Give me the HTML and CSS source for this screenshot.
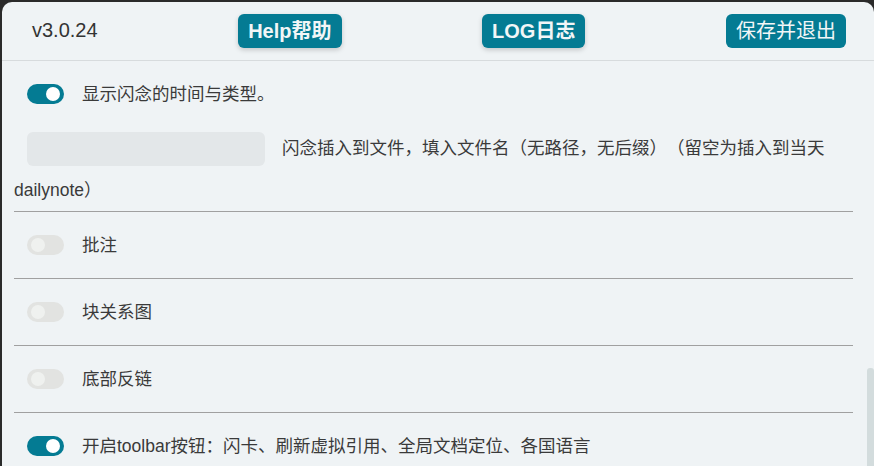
FILE: index.html
```html
<!DOCTYPE html>
<html lang="zh-CN">
<head>
<meta charset="UTF-8">
<meta name="viewport" content="width=device-width, initial-scale=1.0">
<title>设置</title>
<link rel="stylesheet" href="styles.css">
</head>
<body>
<div class="panel">
  <div class="header">
    <span class="version">v3.0.24</span>
    <button class="btn btn-bold">Help帮助</button>
    <button class="btn btn-bold">LOG日志</button>
    <button class="btn btn-plain">保存并退出</button>
  </div>
  <div class="content">
    <div class="row first">
      <span class="toggle on"></span>
      <span class="label">显示闪念的时间与类型。</span>
    </div>
    <div class="row-text">
      <span class="input"></span>闪念插入到文件，填入文件名（无路径，无后缀）（留空为插入到当天 dailynote）
    </div>
    <div class="row">
      <span class="toggle"></span>
      <span class="label">批注</span>
    </div>
    <div class="row">
      <span class="toggle"></span>
      <span class="label">块关系图</span>
    </div>
    <div class="row">
      <span class="toggle"></span>
      <span class="label">底部反链</span>
    </div>
    <div class="row">
      <span class="toggle on"></span>
      <span class="label">开启toolbar按钮：闪卡、刷新虚拟引用、全局文档定位、各国语言</span>
    </div>
  </div>
  <div class="scroll-thumb"></div>
</div>
</body>
</html>
```

FILE: styles.css
```css
html, body {
  margin: 0;
  height: 100%;
  overflow: hidden;
}

body {
  background-color: #2a2a2a;
  font-family: "Liberation Sans", "Noto Sans CJK SC", sans-serif;
  color: #3a3a3a;
  text-spacing-trim: space-all;
}

.panel {
  position: relative;
  margin: 2px 0 0 2px;
  height: 464px;
  background-color: #eff3f5;
  border-radius: 10px 10px 0 0;
  overflow: hidden;
}

.header {
  height: 58px;
  display: flex;
  align-items: center;
  justify-content: space-between;
  padding: 0 28px 0 30px;
  border-bottom: 1px solid #d7dbdd;
}

.version {
  font-size: 20px;
  color: #333;
  margin-top: -2px;
}

.btn {
  height: 34px;
  padding: 0 10px;
  border: none;
  border-radius: 6px;
  background-color: #047b93;
  color: #f2f6f7;
  font-family: "Liberation Sans", "Noto Sans CJK SC", sans-serif;
  font-size: 20px;
  line-height: 34px;
}

.btn-bold {
  font-weight: bold;
  box-shadow: 0 2px 5px rgba(0, 0, 0, 0.18);
}

.btn-plain {
  font-weight: normal;
}

.content {
  margin: 0 21px 0 12px;
  font-size: 17.5px;
}

.row {
  height: 66px;
  display: flex;
  align-items: center;
  border-top: 1px solid #a0a0a0;
}

.row.first {
  border-top: none;
}

.row-text {
  line-height: 42px;
  border-bottom: 1px solid #a0a0a0;
}

.row-text + .row {
  border-top: none;
}

.input {
  display: inline-block;
  width: 238px;
  height: 34px;
  margin: 0 17px 0 13px;
  vertical-align: middle;
  background-color: #e3e7e9;
  border-radius: 6px;
}

.label {
  line-height: 24px;
}

.toggle {
  position: relative;
  flex: none;
  width: 37px;
  height: 20px;
  margin: 0 18px 0 13px;
  border-radius: 10px;
  background-color: #e2e3e1;
}

.toggle::after {
  content: "";
  position: absolute;
  top: 3px;
  left: 4px;
  width: 14px;
  height: 14px;
  border-radius: 50%;
  background-color: #eff1ef;
}

.toggle.on {
  background-color: #047b93;
}

.toggle.on::after {
  left: 19px;
  background-color: #fff;
}

.scroll-thumb {
  position: absolute;
  right: 0;
  top: 366px;
  width: 7px;
  height: 120px;
  border-radius: 3px 3px 0 0;
  background-color: #d3dcdd;
}
```
